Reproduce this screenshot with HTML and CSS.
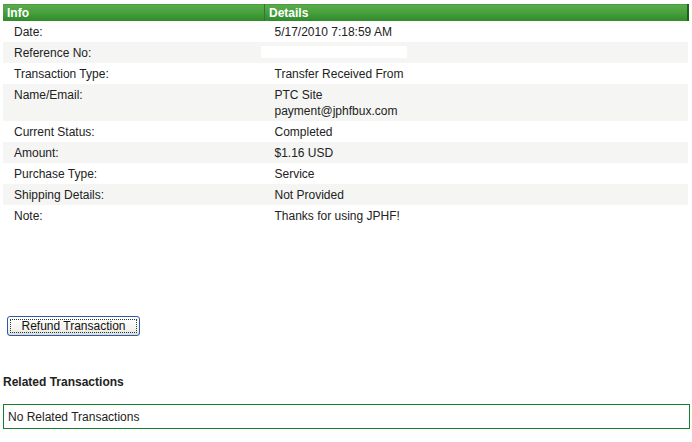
FILE: index.html
```html
<!DOCTYPE html>
<html lang="en">
<head>
  <meta charset="UTF-8" />
  <title>Transaction Details</title>
  <link rel="stylesheet" href="styles.css">
</head>
<body>

<div class="page">
  <table class="details">
    <thead>
      <tr>
        <th class="col-info">Info</th>
        <th class="col-details">Details</th>
      </tr>
    </thead>
    <tbody>
      <tr><td>Date:</td><td>5/17/2010 7:18:59 AM</td></tr>
      <tr><td>Reference No:</td><td><span class="redacted"></span></td></tr>
      <tr><td>Transaction Type:</td><td>Transfer Received From</td></tr>
      <tr><td>Name/Email:</td><td>PTC Site<br>payment@jphfbux.com</td></tr>
      <tr><td>Current Status:</td><td>Completed</td></tr>
      <tr><td>Amount:</td><td>$1.16 USD</td></tr>
      <tr><td>Purchase Type:</td><td>Service</td></tr>
      <tr><td>Shipping Details:</td><td>Not Provided</td></tr>
      <tr><td>Note:</td><td>Thanks for using JPHF!</td></tr>
    </tbody>
  </table>

  <div class="actions">
    <button class="btn"><span class="focus">Refund Transaction</span></button>
  </div>

  <h4 class="related-title">Related Transactions</h4>
  <div class="related-box">No Related Transactions</div>
</div>

</body>
</html>
```

FILE: styles.css
```css
body {
  margin: 0;
  font-family: "Liberation Sans", Arial, sans-serif;
  font-size: 12px;
  color: #222;
  background: #fff;
}

.page {
  padding: 4px 3px 0 3px;
  width: 686px;
}

.details {
  width: 686px;
  border-collapse: collapse;
}

.details th {
  text-align: left;
  color: #fff;
  font-weight: bold;
  font-size: 12px;
  height: 16px;
  line-height: 14px;
  padding: 1px 4px 0 4px;
  background: linear-gradient(#3f8f33 0, #5aab4b 1px, #48a03d 50%, #2f8a2b 100%);
}

.details th.col-info {
  width: 253px;
  border-right: 1px solid #2d7a27;
}

.details th.col-details {
  border-right: 2px solid #1f5e1c;
}

.details td {
  padding: 3px 10px 2px 11px;
  line-height: 16px;
  vertical-align: top;
}

.details td + td {
  padding-left: 10px;
}

.details tbody tr:nth-child(even) td {
  background: #f5f5f3;
}

.redacted {
  display: inline-block;
  width: 146px;
  height: 12px;
  margin: 1px 0 0 -14px;
  background: #fff;
  vertical-align: top;
}

.actions {
  margin-top: 90px;
  padding-left: 4px;
}

.btn {
  font-family: "Liberation Sans", Arial, sans-serif;
  font-size: 12px;
  color: #111;
  width: 133px;
  height: 20px;
  padding: 2px;
  border: 1px solid #2a5aa8;
  border-radius: 3px;
  background: linear-gradient(#ffffff, #f2f2ee 70%, #dcdcd4);
  cursor: pointer;
}

.btn .focus {
  display: block;
  border: 1px dotted #333;
  line-height: 12px;
  padding: 0 2px;
}

.related-title {
  margin: 39px 0 0 0;
  font-size: 12px;
  font-weight: bold;
  color: #222;
  line-height: 14px;
}

.related-box {
  margin-top: 15px;
  border: 1px solid #17802a;
  height: 23px;
  line-height: 25px;
  padding-left: 4px;
  width: 681px;
}
```
